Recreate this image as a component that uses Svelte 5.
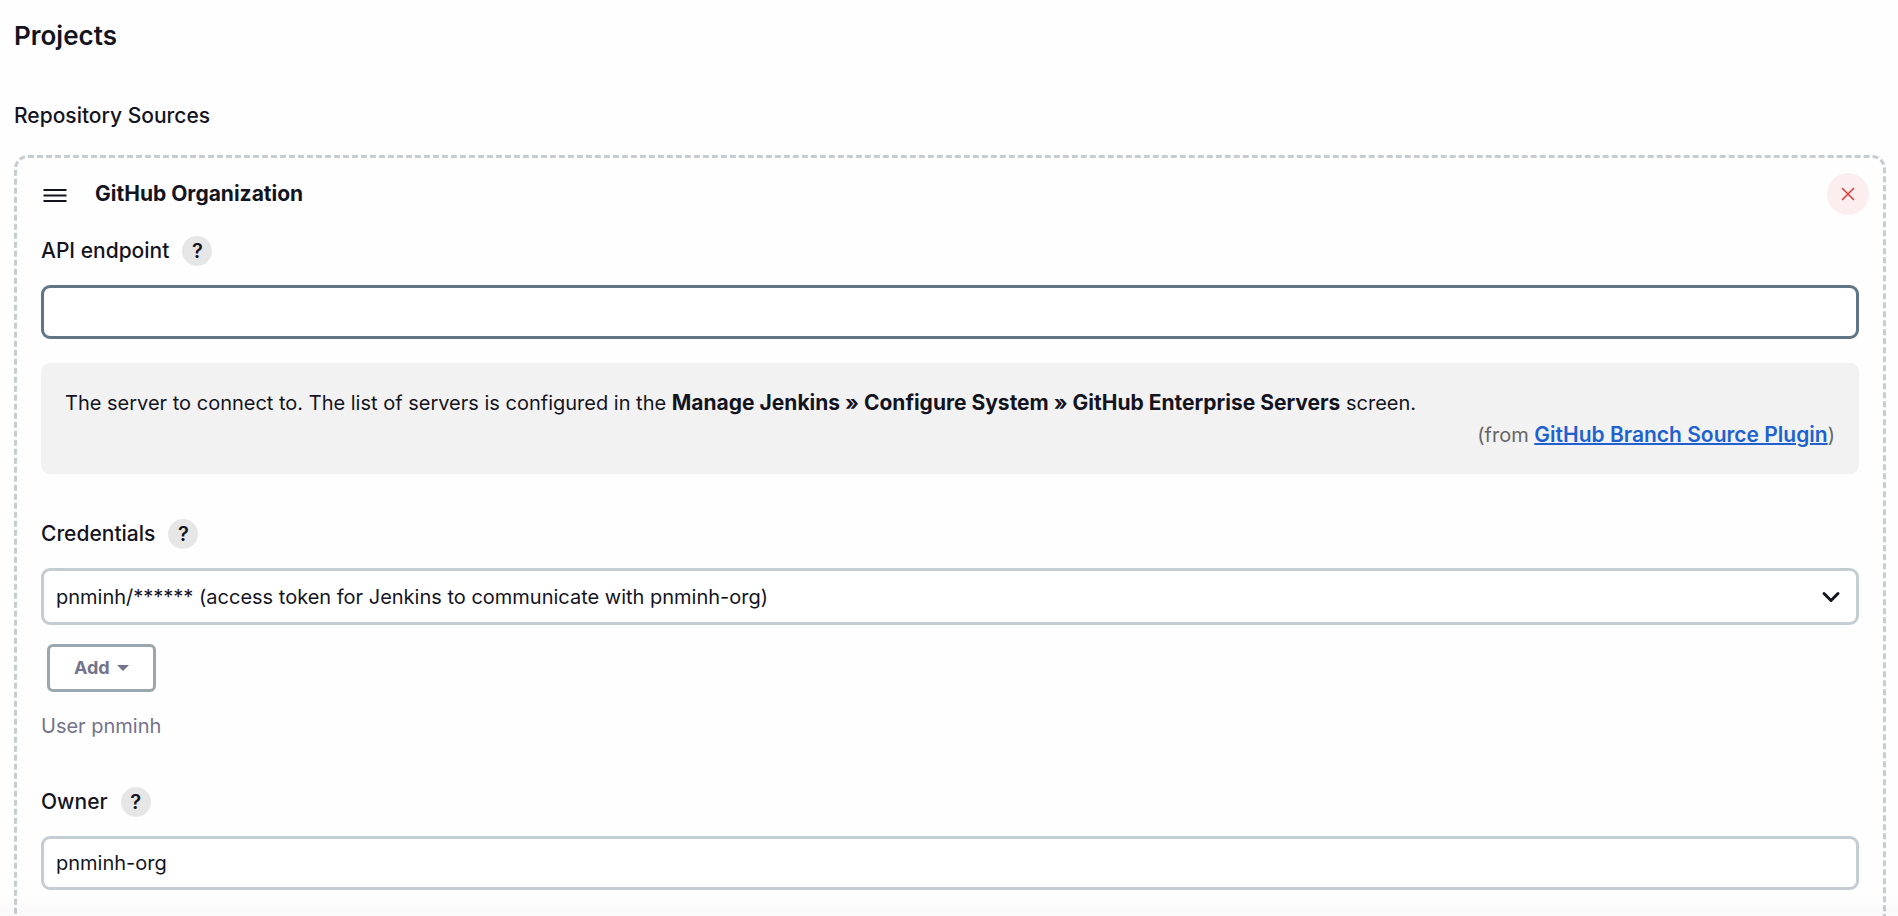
<script>
  let endpoint = $state('');
  let credential = $state('pnminh');
  let owner = $state('pnminh-org');
</script>

{#snippet help(topic)}
  <button type="button" class="help" aria-label={`Help for ${topic}`}>?</button>
{/snippet}

<main class="page">
  <h1>Projects</h1>
  <h2>Repository Sources</h2>

  <section class="source">
    <header class="source-head">
      <svg class="grip" viewBox="0 0 24 16" aria-hidden="true">
        <path d="M0.5 4H23.5M0.5 9.5H23.5M0.5 15H23.5" />
      </svg>
      <h3>GitHub Organization</h3>
      <button type="button" class="remove" aria-label="Remove source">
        <svg viewBox="0 0 14 14" aria-hidden="true"><path d="M1.5 1.5L12.5 12.5M12.5 1.5L1.5 12.5" /></svg>
      </button>
    </header>

    <div class="fields">
      <div class="field">
        <div class="label-row">
          <label for="endpoint">API endpoint</label>
          {@render help('API endpoint')}
        </div>
        <input id="endpoint" class="control active" type="text" bind:value={endpoint} />
        <div class="help-text">
          <p>
            The server to connect to. The list of servers is configured in the
            <strong>Manage Jenkins » Configure System » GitHub Enterprise Servers</strong> screen.
          </p>
          <p class="from">(from <a href="#plugin">GitHub Branch Source Plugin</a>)</p>
        </div>
      </div>

      <div class="field">
        <div class="label-row">
          <label for="credentials">Credentials</label>
          {@render help('Credentials')}
        </div>
        <div class="select-wrap">
          <select id="credentials" class="control" bind:value={credential}>
            <option value="pnminh">pnminh/****** (access token for Jenkins to communicate with pnminh-org)</option>
          </select>
          <svg class="chevron" viewBox="0 0 20 12" aria-hidden="true"><path d="M3 2.5L10 9.5L17 2.5" /></svg>
        </div>
        <button type="button" class="add">
          Add
          <svg viewBox="0 0 12 6" aria-hidden="true"><path d="M0 0H12L6 6Z" /></svg>
        </button>
        <p class="note">User pnminh</p>
      </div>

      <div class="field">
        <div class="label-row">
          <label for="owner">Owner</label>
          {@render help('Owner')}
        </div>
        <input id="owner" class="control" type="text" bind:value={owner} />
      </div>
    </div>
  </section>
  <div class="fade"></div>
</main>

<style>
  :global(body) {
    margin: 0;
    background: #fefefe;
  }

  .page,
  .page * {
    box-sizing: border-box;
  }

  .page {
    height: 100vh;
    overflow: hidden;
    padding: 20px 12px 0 14px;
    color: #14141f;
    font-family: Inter, 'Noto Sans', sans-serif;
    font-size: 20px;
    line-height: 32px;
  }

  h1,
  h2,
  h3,
  p {
    margin: 0;
  }

  h1 {
    font-size: 26px;
    font-weight: 600;
  }

  h2 {
    margin-top: 48px;
    font-size: 21px;
    font-weight: 500;
  }

  h3 {
    flex: 1;
    font-size: 21px;
    font-weight: 700;
  }

  button,
  input,
  select {
    font: inherit;
    color: inherit;
  }

  .source {
    margin-top: 23px;
    padding: 15px 14px 60px 24px;
    border: 3px dashed #c4cdd2;
    border-radius: 14px;
  }

  .source-head {
    display: flex;
    align-items: center;
  }

  .grip {
    width: 24px;
    height: 16px;
    margin: 0 28px 0 2px;
    fill: none;
    stroke: #14141f;
    stroke-width: 2;
  }

  .remove {
    display: grid;
    place-items: center;
    width: 42px;
    height: 42px;
    padding: 0;
    border: 0;
    border-radius: 50%;
    background: #fceeee;
  }

  .remove svg {
    width: 14px;
    height: 14px;
    fill: none;
    stroke: #e03a3a;
    stroke-width: 1.5;
    stroke-linecap: round;
  }

  .fields {
    display: flex;
    flex-direction: column;
    gap: 44px;
    padding: 20px 10px 0 0;
  }

  .label-row {
    display: flex;
    align-items: center;
    gap: 13px;
    margin-bottom: 18px;
    font-size: 21px;
    font-weight: 500;
  }

  .help {
    width: 30px;
    height: 30px;
    padding: 0;
    border: 0;
    border-radius: 50%;
    background: #e6e6e6;
    font-size: 20px;
    font-weight: 600;
    line-height: 30px;
  }

  .control {
    display: block;
    width: 100%;
    height: 54px;
    padding: 0 12px;
    border: 3px solid #c4cdd2;
    border-radius: 9px;
    outline: none;
    background: #fff;
  }

  .active {
    border-color: #607687;
  }

  .help-text {
    margin-top: 24px;
    padding: 24px 24px 23px;
    border-radius: 9px;
    background: #f2f2f2;
  }

  .from {
    color: #666;
    text-align: right;
  }

  strong {
    font-size: 21px;
    font-weight: 700;
  }

  a {
    color: #1f62cf;
    font-size: 21px;
    font-weight: 600;
    text-decoration: underline;
    text-decoration-thickness: 2px;
  }

  strong,
  a {
    line-height: 1;
  }

  .select-wrap {
    display: grid;
    align-items: center;
  }

  .select-wrap > * {
    grid-area: 1 / 1;
  }

  select.control {
    height: 57px;
    appearance: none;
  }

  .chevron {
    justify-self: end;
    width: 20px;
    height: 12px;
    margin-right: 18px;
    fill: none;
    stroke: #14141f;
    stroke-width: 3;
    stroke-linecap: round;
    stroke-linejoin: round;
    pointer-events: none;
  }

  .add {
    display: flex;
    align-items: center;
    gap: 7px;
    height: 48px;
    margin: 19px 0 0 6px;
    padding: 0 24px;
    border: 3px solid #9ba7af;
    border-radius: 6px;
    background: #fff;
    color: #73738c;
    font-size: 18px;
    font-weight: 700;
  }

  .add svg {
    width: 12px;
    height: 6px;
    fill: currentColor;
  }

  .note {
    margin-top: 18px;
    color: #73738c;
  }

  .fade {
    position: fixed;
    right: 0;
    bottom: 0;
    left: 0;
    height: 20px;
    background: linear-gradient(rgba(0, 0, 0, 0), rgba(0, 0, 0, 0.02));
    pointer-events: none;
  }
</style>
